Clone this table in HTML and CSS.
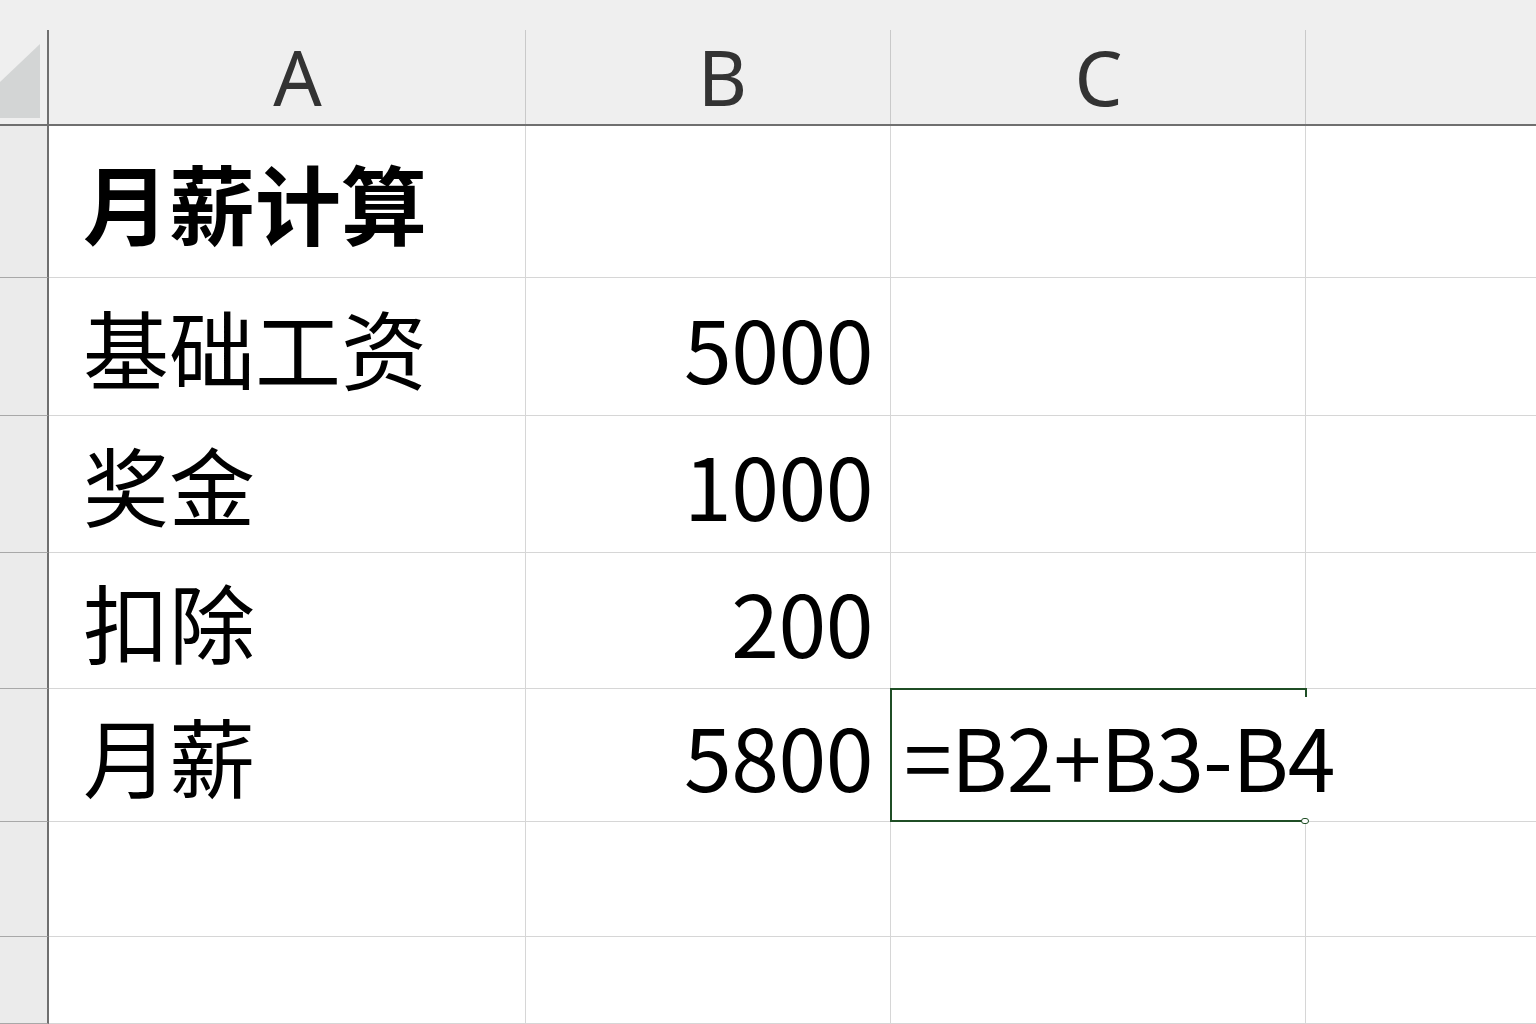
FILE: index.html
```html
<!DOCTYPE html>
<html lang="zh-CN">
<head>
<meta charset="utf-8">
<title>月薪计算</title>
<link rel="stylesheet" href="styles.css">
</head>
<body>
<div class="sheet">
  <div class="corner">
    <svg class="corner-tri" width="41" height="120" viewBox="0 0 41 120"><polygon points="40,44 40,118 0,118 0,82" fill="#d3d5d5"/></svg>
  </div>
  <div class="colhead col-a">A</div>
  <div class="colhead col-b">B</div>
  <div class="colhead">C</div>
  <div class="colhead last"></div>

  <div class="rowhead"></div>
  <div class="cell text title">月薪计算</div>
  <div class="cell"></div>
  <div class="cell"></div>
  <div class="cell last"></div>

  <div class="rowhead"></div>
  <div class="cell text">基础工资</div>
  <div class="cell num">5000</div>
  <div class="cell"></div>
  <div class="cell last"></div>

  <div class="rowhead"></div>
  <div class="cell text">奖金</div>
  <div class="cell num">1000</div>
  <div class="cell"></div>
  <div class="cell last"></div>

  <div class="rowhead"></div>
  <div class="cell text">扣除</div>
  <div class="cell num">200</div>
  <div class="cell"></div>
  <div class="cell last"></div>

  <div class="rowhead"></div>
  <div class="cell text">月薪</div>
  <div class="cell num">5800</div>
  <div class="cell formula selected">=B2+B3-B4<span class="fill-handle"></span></div>
  <div class="cell last"></div>

  <div class="rowhead"></div>
  <div class="cell"></div>
  <div class="cell"></div>
  <div class="cell"></div>
  <div class="cell last"></div>

  <div class="rowhead"></div>
  <div class="cell"></div>
  <div class="cell"></div>
  <div class="cell"></div>
  <div class="cell last"></div>
</div>
</body>
</html>
```

FILE: styles.css
```css
html, body {
  margin: 0;
  padding: 0;
  width: 1536px;
  height: 1024px;
  overflow: hidden;
  background: #ffffff;
}

.sheet {
  display: grid;
  grid-template-columns: 49px 477px 365px 415px 1fr;
  grid-template-rows: 126px 152px 138px 137px 136px 133px 115px 1fr;
  width: 1536px;
  height: 1024px;
  font-family: "Noto Sans CJK SC", "Noto Sans", sans-serif;
  color: #000;
}

.corner {
  background:
    linear-gradient(#6f6f6f, #6f6f6f) right bottom / 2px 94px no-repeat,
    #efefef;
  border-bottom: 2px solid #6f6f6f;
  box-sizing: border-box;
  overflow: hidden;
}

.corner-tri {
  display: block;
}

.colhead {
  box-sizing: border-box;
  border-bottom: 2px solid #6f6f6f;
  background:
    linear-gradient(#c9c9c9, #c9c9c9) right bottom / 1px 94px no-repeat,
    #efefef;
  display: flex;
  align-items: center;
  justify-content: center;
  padding-top: 30px;
  font-family: "Noto Sans", "Open Sans", sans-serif;
  font-size: 76px;
  color: #333333;
  line-height: 1;
}

.col-a {
  padding-left: 20px;
}

.col-b {
  padding-left: 28px;
}

.colhead.last {
  background: #efefef;
}

.rowhead {
  box-sizing: border-box;
  background: #ebebeb;
  border-right: 2px solid #6f6f6f;
  border-bottom: 1px solid #a8a8a8;
}

.cell {
  box-sizing: border-box;
  border-right: 1px solid #d6d6d6;
  border-bottom: 1px solid #d6d6d6;
  display: flex;
  align-items: center;
  font-size: 86px;
  line-height: 1;
  white-space: nowrap;
  padding-top: 0;
}

.cell.last {
  border-right: none;
}

.text {
  padding-left: 34px;
}

.title {
  font-weight: 700;
}

.num {
  justify-content: flex-end;
  padding-right: 17px;
  letter-spacing: -0.5px;
}

.formula {
  padding-left: 13px;
  overflow: visible;
  position: relative;
  z-index: 2;
  border-right: none;
  letter-spacing: -0.8px;
}

.selected::before {
  content: "";
  position: absolute;
  left: -1px;
  top: -1px;
  bottom: -1px;
  right: 0;
  border: 2px solid #1f4e25;
  border-right: none;
  pointer-events: none;
}

.selected::after {
  content: "";
  position: absolute;
  right: -1px;
  top: -1px;
  width: 2px;
  height: 9px;
  background: #1f4e25;
}

.fill-handle {
  position: absolute;
  right: -3px;
  bottom: -3px;
  width: 6px;
  height: 4px;
  border: 1px solid #1f4e25;
  border-radius: 3px;
  background: #ffffff;
}
```
